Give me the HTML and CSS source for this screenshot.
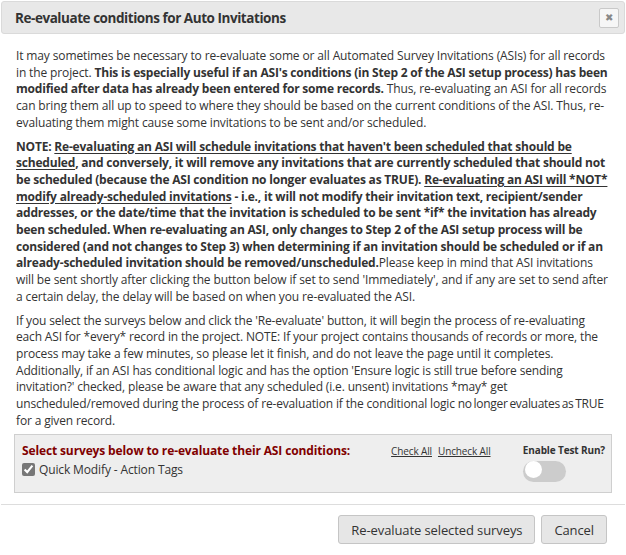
FILE: index.html
```html
<!DOCTYPE html>
<html lang="en">
<head>
  <meta charset="UTF-8"/>
  <title>Re-evaluate conditions for Auto Invitations</title>
  <link rel="stylesheet" href="styles.css">
</head>
<body>
  <div class="dialog">
    <div class="titlebar">
      <span class="title">Re-evaluate conditions for Auto Invitations</span>
      <button class="close" type="button">&#10006;</button>
    </div>

    <div class="content">
      <p>It may sometimes be necessary to re-evaluate some or all Automated Survey Invitations (ASIs) for all records in the project. <b>This is especially useful if an ASI's conditions (in Step 2 of the ASI setup process) has been modified after data has already been entered for some records.</b> Thus, re-evaluating an ASI for all records can bring them all up to speed to where they should be based on the current conditions of the ASI. Thus, re-evaluating them might cause some invitations to be sent and/or scheduled.</p>

      <p><b>NOTE: <u>Re-evaluating an ASI will schedule invitations that haven't been scheduled that should be scheduled</u>, and conversely, it will remove any invitations that are currently scheduled that should not be scheduled (because the ASI condition no longer evaluates as TRUE). <u>Re-evaluating an ASI will *NOT* modify already-scheduled invitations</u> - i.e., it will not modify their invitation text, recipient/sender addresses, or the date/time that the invitation is scheduled to be sent *if* the invitation has already been scheduled. When re-evaluating an ASI, only changes to Step 2 of the ASI setup process will be considered (and not changes to Step 3) when determining if an invitation should be scheduled or if an already-scheduled invitation should be removed/unscheduled.</b>Please keep in mind that ASI invitations will be sent shortly after clicking the button below if set to send 'Immediately', and if any are set to send after a certain delay, the delay will be based on when you re-evaluated the ASI.</p>

      <p class="tight">If you select the surveys below and click the 'Re-evaluate' button, it will begin the process of re-evaluating each ASI for *every* record in the project. NOTE: If your project contains thousands of records or more, the process may take a few minutes, so please let it finish, and do not leave the page until it completes. Additionally, if an ASI has conditional logic and has the option 'Ensure logic is still true before sending invitation?' checked, please be aware that any scheduled (i.e. unsent) invitations *may* get unscheduled/removed during the process of re-evaluation if the conditional logic <span class="fit">no longer evaluates as TRUE</span> for a given record.</p>

      <div class="surveys">
        <div class="surveys-main">
          <div class="surveys-head">
            <span class="surveys-label">Select surveys below to re-evaluate their ASI conditions:</span>
            <a href="#" class="small-link">Check All</a>
            <a href="#" class="small-link">Uncheck All</a>
          </div>
          <label class="survey-item"><input type="checkbox" checked/> Quick Modify - Action Tags</label>
        </div>
        <div class="testrun">
          <div class="testrun-label">Enable Test Run?</div>
          <span class="toggle"><span class="knob"></span></span>
        </div>
      </div>
    </div>

    <div class="buttons">
      <button type="button" class="btn">Re-evaluate selected surveys</button>
      <button type="button" class="btn">Cancel</button>
    </div>
  </div>
</body>
</html>
```

FILE: styles.css
```css
html,body{margin:0;padding:0;background:#fff;}
body{font-family:"Open Sans","Liberation Sans",sans-serif;font-size:12px;letter-spacing:-0.13px;color:#333;}

.dialog{width:626px;height:555px;box-sizing:border-box;padding:1px 1px 0 1px;}

.titlebar{
  display:flex;align-items:center;justify-content:space-between;
  height:31px;padding:0 5px 0 13px;
  background:#e8e8e8;border:1px solid #dadada;border-radius:3px;
}
.title{font-weight:700;font-size:13.5px;color:#333;letter-spacing:-0.45px;}
.close{
  width:20px;height:20px;padding:0;
  background:#f6f6f6;border:1px solid #c9c9c9;border-radius:2px;
  font-size:10px;line-height:18px;color:#888;cursor:pointer;
}

.content{padding:14px 14px 0 15px;}
.content p{margin:0 0 7px;line-height:16.7px;}
.content p.tight{letter-spacing:-0.155px;}
.content .fit{letter-spacing:-0.3px;word-spacing:-1px;}
.content b{letter-spacing:-0.2px;}
.content u{text-underline-offset:2px;}

.surveys{
  display:flex;justify-content:space-between;
  margin:-2px -1px 0 -2px;padding:7px 6px 10px 7px;
  background:#eee;border:1px solid #cfcfcf;
}
.surveys-head{display:flex;align-items:baseline;white-space:nowrap;}
.surveys-label{font-weight:700;color:#800000;margin-right:41px;}
.small-link{font-size:10px;color:#333;margin-right:6px;}
.survey-item{display:flex;align-items:center;margin-top:2px;}
.survey-item input{margin:0 4px 0 0;width:13px;height:13px;accent-color:#777;}

.testrun{white-space:nowrap;}
.testrun-label{font-size:10px;font-weight:700;margin-top:1px;}
.toggle{
  display:block;width:43px;height:21px;margin-top:4px;
  background:#ccc;border-radius:11px;
}
.knob{display:block;width:17px;height:17px;margin:2px;background:#fff;border-radius:50%;}

.buttons{
  display:flex;justify-content:flex-end;gap:6px;
  margin-top:11px;padding:10px 18px 0 0;
  border-top:1px solid #ddd;
}
.btn{
  height:29px;padding:0 12px;
  font-family:inherit;font-size:13px;letter-spacing:-0.1px;color:#333;
  background:#e6e6e6;border:1px solid #c5c5c5;border-radius:3px;
}
```
